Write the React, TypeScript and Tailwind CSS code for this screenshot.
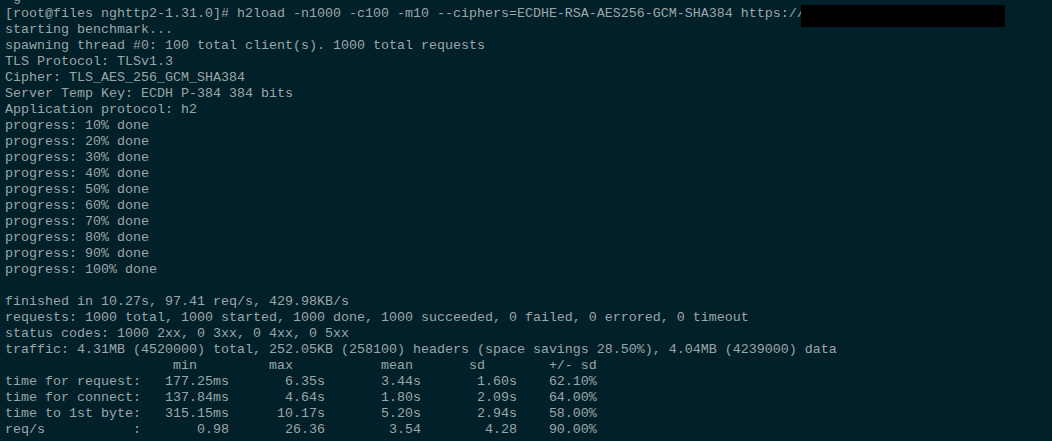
import React from "react";

// h2load prints the latency table with fixed-width columns
const pad = (s: string, n: number) => s.padStart(n, " ");
const row = (label: string, cols: [string, string, string, string, string]) =>
  label.padEnd(18, " ") +
  pad(cols[0], 10) +
  "  " +
  pad(cols[1], 10) +
  "  " +
  pad(cols[2], 10) +
  "  " +
  pad(cols[3], 10) +
  pad(cols[4], 9) +
  "%";

const header =
  " ".repeat(21) + "min" + " ".repeat(9) + "max" + " ".repeat(11) + "mean" + " ".repeat(7) + "sd" + " ".repeat(8) + "+/- sd";

const lines: string[] = [
  " g",
  "[root@files nghttp2-1.31.0]# h2load -n1000 -c100 -m10 --ciphers=ECDHE-RSA-AES256-GCM-SHA384 https://",
  "starting benchmark...",
  "spawning thread #0: 100 total client(s). 1000 total requests",
  "TLS Protocol: TLSv1.3",
  "Cipher: TLS_AES_256_GCM_SHA384",
  "Server Temp Key: ECDH P-384 384 bits",
  "Application protocol: h2",
  "progress: 10% done",
  "progress: 20% done",
  "progress: 30% done",
  "progress: 40% done",
  "progress: 50% done",
  "progress: 60% done",
  "progress: 70% done",
  "progress: 80% done",
  "progress: 90% done",
  "progress: 100% done",
  "",
  "finished in 10.27s, 97.41 req/s, 429.98KB/s",
  "requests: 1000 total, 1000 started, 1000 done, 1000 succeeded, 0 failed, 0 errored, 0 timeout",
  "status codes: 1000 2xx, 0 3xx, 0 4xx, 0 5xx",
  "traffic: 4.31MB (4520000) total, 252.05KB (258100) headers (space savings 28.50%), 4.04MB (4239000) data",
  header,
  row("time for request:", ["177.25ms", "6.35s", "3.44s", "1.60s", "62.10"]),
  row("time for connect:", ["137.84ms", "4.64s", "1.80s", "2.09s", "64.00"]),
  row("time to 1st byte:", ["315.15ms", "10.17s", "5.20s", "2.94s", "58.00"]),
  row("req/s           :", ["0.98", "26.36", "3.54", "4.28", "90.00"]),
];

export default function App() {
  return (
    <div className="relative h-[441px] w-full overflow-hidden bg-[#01202a]">
      <div className="-mt-[10px] pl-[5px] font-['Liberation_Mono','Courier_New',monospace] text-[13.333px] leading-[16px] text-[#9ca6a7]">
        {lines.map((line, i) => (
          <div key={i} className="h-[16px] whitespace-pre">
            {line}
          </div>
        ))}
      </div>
      {/* redacted url */}
      <div className="absolute left-[801px] top-[5px] h-[22px] w-[204px] bg-black" />
    </div>
  );
}
